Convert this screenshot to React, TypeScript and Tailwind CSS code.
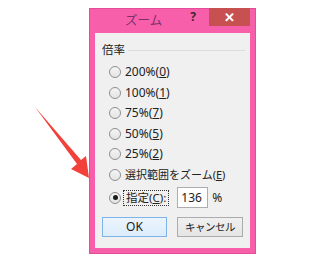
import React from 'react';

const font = { fontFamily: '"Noto Sans", "Noto Sans CJK JP", sans-serif' };

const options = [
  { label: '200%(', key: '0', jp: false },
  { label: '100%(', key: '1', jp: false },
  { label: '75%(', key: '7', jp: false },
  { label: '50%(', key: '5', jp: false },
  { label: '25%(', key: '2', jp: false },
  { label: '選択範囲をズーム(', key: 'E', jp: true },
];

const Radio = ({ checked = false }: { checked?: boolean }) => (
  <span className="w-3 h-3 rounded-full border border-[#8f8f8f] bg-gradient-to-b from-[#f4f4f4] to-[#e4e4e4] flex items-center justify-center shrink-0">
    {checked && <span className="w-[5px] h-[5px] rounded-full bg-[#1a1a1a]" />}
  </span>
);

const App = () => {
  return (
    <div className="w-[332px] h-[268px] bg-white relative overflow-hidden" style={font}>
      <div className="ml-[89px] pt-[8px]">
        <div className="w-[167px] h-[246px] bg-[#f75fab] border border-[#e54d99] flex flex-col px-[5px] pb-[5px]">
          {/* title bar */}
          <div className="h-[24px] flex items-start relative">
            <span className="ml-[30px] mt-[5px] text-[12.5px] leading-[14px] text-[#7d2f6c]">ズーム</span>
            <span className="ml-auto mt-[1px] text-[12px] font-bold text-[#3a2a33] leading-[14px] mr-[13px]">?</span>
            <div className="w-[41px] h-[18px] bg-[#c75050] flex items-center justify-center text-white text-[13px] font-bold leading-none -mt-px">
              ✕
            </div>
          </div>

          {/* client area */}
          <div className="flex-1 bg-[#f0f0f0] flex flex-col pt-[9px] pb-[11px] text-[12px] text-[#222]">
            <div className="h-4 flex items-center pl-[7px] pr-[5px]">
              <span className="leading-none text-[11.5px]">倍率</span>
              <span className="ml-[3px] flex-1 h-px bg-[#dcdcdc]" />
            </div>

            <div className="mt-[4px] flex flex-col pl-[14px]">
              {options.map((o) => (
                <div key={o.key} className="h-[20.5px] flex items-center gap-[4px]">
                  <Radio />
                  <span className={o.jp ? 'leading-none text-[11px]' : 'leading-none'}>
                    {o.label}
                    <span className="underline">{o.key}</span>)
                  </span>
                </div>
              ))}
              <div className="mt-[2px] h-[21px] flex items-center">
                <Radio checked />
                <span className="ml-[2px] px-[2px] h-[16px] flex items-center border border-dotted border-[#333] leading-none text-[11.5px]">
                  指定(<span className="underline">C</span>):
                </span>
                <div className="ml-[8px] w-[31px] h-[21px] bg-white border border-[#abadb3] flex items-center pl-[3px] leading-none">
                  136
                </div>
                <span className="ml-[4px] leading-none">%</span>
              </div>
            </div>

            <div className="mt-[9px] flex pl-[7px] gap-[10px]">
              <div className="w-[65px] h-5 border border-[#7eb4ea] bg-gradient-to-b from-[#ecf4fc] to-[#dcecfc] flex items-center justify-center leading-none">
                OK
              </div>
              <div className="w-[66px] h-5 border border-[#acacac] bg-gradient-to-b from-[#f0f0f0] to-[#e5e5e5] flex items-center justify-center leading-none text-[10.5px] tracking-[-0.5px]">
                キャンセル
              </div>
            </div>
          </div>
        </div>
      </div>

      <svg className="absolute left-0 top-0" width="100" height="200" viewBox="0 0 100 200">
        <polygon points="35,107 81,160 86,156 89,178 71,169 77,164" fill="#f2413a" />
      </svg>
    </div>
  );
};

export default App;
